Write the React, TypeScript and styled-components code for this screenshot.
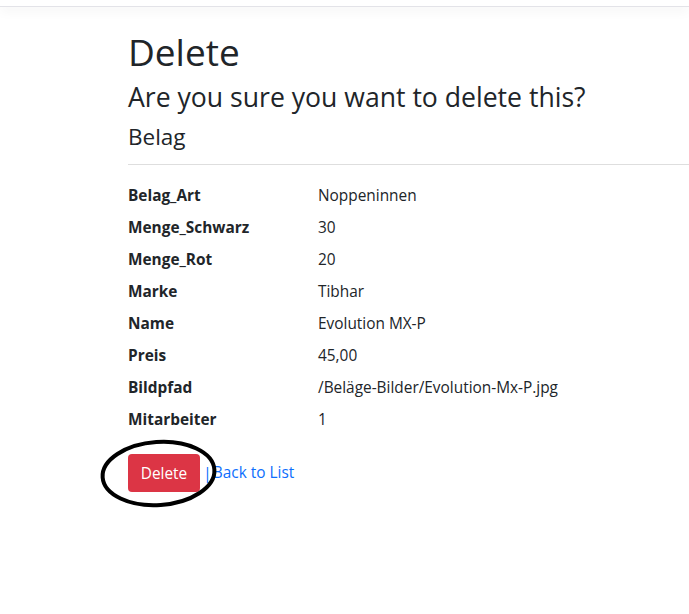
import React from "react";
import styled, { createGlobalStyle } from "styled-components";

const Global = createGlobalStyle`
  html, body { margin: 0; padding: 0; background: #fff; }
  body {
    font-family: "Open Sans", "Noto Sans", "Liberation Sans", sans-serif;
    color: #212529;
    font-size: 16px;
    line-height: 1.5;
  }
`;

const Page = styled.div`
  min-height: 614px;
`;

const Navbar = styled.header`
  height: 6px;
  border-bottom: 1px solid #e3e3e8;
  box-shadow: 0 4px 12px rgba(0, 0, 0, 0.05);
`;

const Main = styled.main`
  padding: 0 0 80px 128px;
`;

const Title = styled.h1`
  margin: 0;
  padding-top: 23px;
  font-size: 37px;
  font-weight: 400;
  line-height: 1.2;
`;

const Question = styled.h3`
  margin: 8px 0 0;
  font-size: 26.6px;
  font-weight: 400;
  line-height: 1.2;
`;

const Entity = styled.h4`
  margin: 9px 0 0;
  font-size: 22.5px;
  font-weight: 400;
  line-height: 1.2;
`;

const Rule = styled.hr`
  margin: 14px 0 19px;
  border: 0;
  border-top: 1px solid #dedede;
`;

const DetailList = styled.dl`
  display: grid;
  grid-template-columns: 190px 1fr;
  row-gap: 8px;
  margin: 0;
  font-size: 15.4px;
  line-height: 24px;
`;

const Term = styled.dt`
  font-weight: 700;
  margin: 0;
`;

const Value = styled.dd`
  margin: 0;
`;

const Actions = styled.div`
  position: relative;
  display: flex;
  align-items: center;
  margin-top: 22px;
  font-size: 15.4px;
`;

const DangerButton = styled.button`
  width: 72px;
  height: 38px;
  border: 0;
  border-radius: 4px;
  background: #dc3545;
  color: #fff;
  font-family: inherit;
  font-size: 15.4px;
  line-height: 1.5;
  padding: 0;
  cursor: pointer;
`;

const Separator = styled.span`
  color: #0d6efd;
  margin-left: 3px;
  margin-right: 1px;
  font-size: 16px;
`;

const BackLink = styled.a`
  color: #0d6efd;
  text-decoration: none;
  margin-top: -2px;
`;

const Marker = styled.svg`
  position: absolute;
  left: -32px;
  top: -20px;
  overflow: visible;
  pointer-events: none;
`;

const rows: [string, string][] = [
  ["Belag_Art", "Noppeninnen"],
  ["Menge_Schwarz", "30"],
  ["Menge_Rot", "20"],
  ["Marke", "Tibhar"],
  ["Name", "Evolution MX-P"],
  ["Preis", "45,00"],
  ["Bildpfad", "/Beläge-Bilder/Evolution-Mx-P.jpg"],
  ["Mitarbeiter", "1"],
];

export default function App() {
  return (
    <Page>
      <Global />
      <Navbar />
      <Main>
        <Title>Delete</Title>
        <Question>Are you sure you want to delete this?</Question>
        <Entity>Belag</Entity>
        <Rule />
        <DetailList>
          {rows.map(([k, v]) => (
            <React.Fragment key={k}>
              <Term>{k}</Term>
              <Value>{v}</Value>
            </React.Fragment>
          ))}
        </DetailList>
        <Actions>
          <DangerButton type="submit">Delete</DangerButton>
          <Separator>|</Separator>
          <BackLink href="#">Back to List</BackLink>
          <Marker width="130" height="80" viewBox="0 0 130 80">
            <ellipse
              cx="62.5"
              cy="39.5"
              rx="56"
              ry="31.5"
              fill="none"
              stroke="#000"
              strokeWidth="4"
              transform="rotate(-4 62.5 39.5)"
            />
          </Marker>
        </Actions>
      </Main>
    </Page>
  );
}
